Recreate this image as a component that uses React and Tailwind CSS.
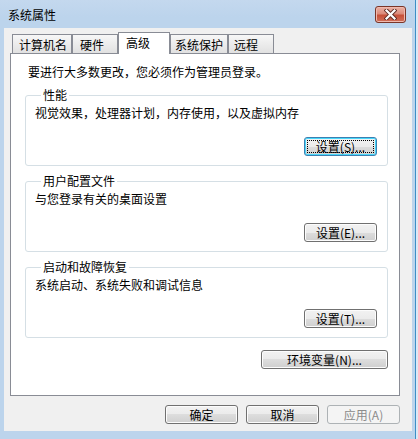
import React from 'react';

const font = "font-['Noto_Sans_CJK_SC','Microsoft_YaHei',sans-serif]";

function WinButton({ label, width, focused, disabled }) {
  if (disabled) {
    return (
      <button className={`${width} h-[19px] rounded-[3px] border border-[#adb2b5] bg-[#f4f4f4] text-[12px] leading-[16px] text-[#8b8b8b] flex items-center justify-center`}>
        {label}
      </button>
    );
  }
  if (focused) {
    return (
      <button className={`${width} h-[19px] rounded-[3px] border border-[#3c7fb1] bg-[linear-gradient(#f2f2f2_0%,#ebebeb_50%,#dddddd_50%,#cfcfcf_100%)] shadow-[inset_0_0_0_1px_#48d8fb] flex items-stretch p-[2px]`}>
        <span className="flex-1 border border-dotted border-black flex items-center justify-center text-[12px] leading-[16px] text-black">
          {label}
        </span>
      </button>
    );
  }
  return (
    <button className={`${width} h-[19px] rounded-[3px] border border-[#707070] bg-[linear-gradient(#f2f2f2_0%,#ebebeb_50%,#dddddd_50%,#cfcfcf_100%)] shadow-[inset_0_0_0_1px_#fcfcfc] text-[12px] leading-[16px] text-black flex items-center justify-center`}>
      {label}
    </button>
  );
}

function Group({ title, text, button, focused }) {
  return (
    <fieldset className="w-[363px] ml-[14px] rounded-[3px] border border-[#d5dfe5] pl-[9px] pr-[10px] pb-[9px]">
      <legend className="ml-[6px] px-[2px] text-[12px] leading-[16px] text-black">{title}</legend>
      <div className="mt-[2px] text-[12px] leading-[16px] text-black">{text}</div>
      <div className="mt-[16px] flex justify-end">
        <WinButton label={button} width="w-[73px]" focused={focused} />
      </div>
    </fieldset>
  );
}

const tabs = [
  { name: '计算机名', w: 'w-[60px] pl-[6px]' },
  { name: '硬件', w: 'w-[46px] pl-[7px]' },
  { name: '高级', w: 'w-[52px] pl-[7px]', active: true },
  { name: '系统保护', w: 'w-[58px] pl-[4px]' },
  { name: '远程', w: 'w-[46px] pl-[5px]' },
];

export default function App() {
  return (
    <div className={`${font} w-[418px] h-[439px] flex bg-[#bcd4ec] overflow-hidden select-none`}>
      <div className="w-[415px] flex flex-col">
        {/* title bar */}
        <div className="h-[28px] flex items-center justify-between pl-[8px] pr-[9px] pt-[2px] bg-[linear-gradient(#c4d8ee,#bcd4ec_60%)]">
          <span className="text-[12px] leading-[16px] text-black">系统属性</span>
          <div className="w-[31px] h-[17px] -mt-[1px] rounded-[3px] border border-[#7a3528] bg-[linear-gradient(#eab1a5_0%,#dc8b7a_45%,#c75038_55%,#d0705a_100%)] shadow-[inset_0_0_0_1px_#efb9ae] flex items-center justify-center">
            <svg width="13" height="11" viewBox="0 0 13 11">
              <path d="M2.5 1.5 L10.5 9.5 M10.5 1.5 L2.5 9.5" stroke="#5b2a22" strokeWidth="4" strokeLinecap="square" />
              <path d="M2.5 1.5 L10.5 9.5 M10.5 1.5 L2.5 9.5" stroke="#ffffff" strokeWidth="2.2" strokeLinecap="square" />
            </svg>
          </div>
        </div>

        <div className="flex">
          <div className="w-[4px]" />
          {/* dialog body */}
          <div className="w-[408px] h-[403px] bg-[#f0f0f0] flex flex-col">
            <div className="h-[25px] flex items-end pl-[8px]">
              {tabs.map((t) =>
                t.active ? (
                  <div
                    key={t.name}
                    className={`${t.w} h-[22px] -mb-px relative z-10 bg-white border border-b-0 border-[#898c95] pt-[2px] text-[12px] leading-[16px] text-black`}
                  >
                    {t.name}
                  </div>
                ) : (
                  <div
                    key={t.name}
                    className={`${t.w} h-[19px] border border-b-0 border-[#898c95] bg-[linear-gradient(#f7f7f7,#e1e1e1)] pt-[2px] text-[12px] leading-[16px] text-black`}
                  >
                    {t.name}
                  </div>
                )
              )}
            </div>

            {/* tab panel */}
            <div className="ml-[6px] w-[390px] h-[343px] border border-[#898c95] bg-white flex flex-col">
              <div className="mt-[10px] pl-[17px] text-[12px] leading-[16px] text-black">
                要进行大多数更改，您必须作为管理员登录。
              </div>
              <div className="mt-[7px] flex flex-col gap-[7px]">
                <Group title="性能" text="视觉效果，处理器计划，内存使用，以及虚拟内存" button="设置(S)..." focused />
                <Group title="用户配置文件" text="与您登录有关的桌面设置" button="设置(E)..." />
                <Group title="启动和故障恢复" text="系统启动、系统失败和调试信息" button="设置(T)..." />
              </div>
              <div className="mt-[12px] pr-[11px] flex justify-end">
                <WinButton label="环境变量(N)..." width="w-[127px]" />
              </div>
            </div>

            {/* dialog buttons */}
            <div className="mt-[9px] pr-[12px] flex justify-end gap-[8px]">
              <WinButton label="确定" width="w-[73px]" />
              <WinButton label="取消" width="w-[73px]" />
              <WinButton label="应用(A)" width="w-[73px]" disabled />
            </div>
          </div>
          <div className="w-[3px]" />
        </div>
      </div>
      <div className="w-px bg-[#3d8fc6]" />
      <div className="w-[2px] bg-[#dbe8f5]" />
    </div>
  );
}
